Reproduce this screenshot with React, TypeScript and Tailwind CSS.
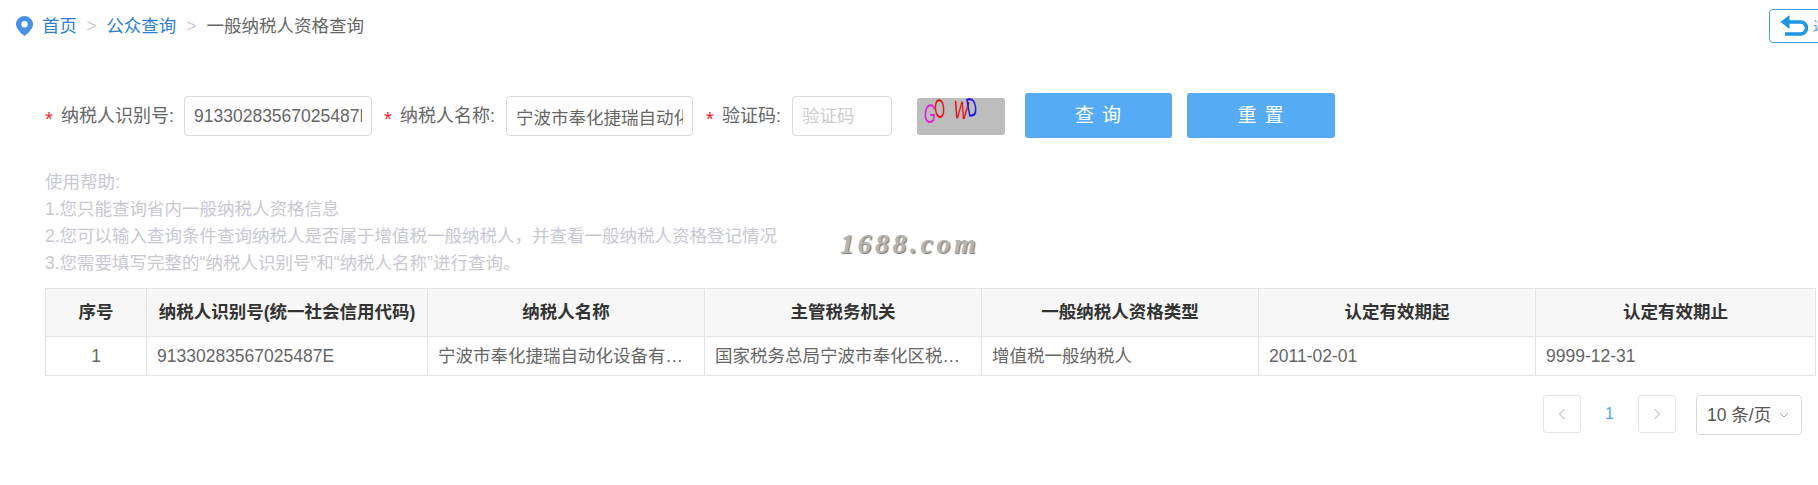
const font = "font-['Liberation_Sans','Noto_Sans_CJK_SC',sans-serif]";

const columns = [
  { title: "序号", width: "w-[101px]" },
  { title: "纳税人识别号(统一社会信用代码)", width: "w-[281px]" },
  { title: "纳税人名称", width: "w-[277px]" },
  { title: "主管税务机关", width: "w-[277px]" },
  { title: "一般纳税人资格类型", width: "w-[277px]" },
  { title: "认定有效期起", width: "w-[277px]" },
  { title: "认定有效期止", width: "w-[280px]" },
];

const row = [
  "91330283567025487E",
  "宁波市奉化捷瑞自动化设备有限公司",
  "国家税务总局宁波市奉化区税务局西坞税务所",
  "增值税一般纳税人",
  "2011-02-01",
  "9999-12-31",
];

function Star() {
  return <span className="mt-[6px] w-[16px] text-[20px] leading-none text-[#f5222d]">*</span>;
}

function Captcha() {
  return (
    <svg width="88" height="37" viewBox="0 0 88 37" className="ml-[25px] rounded-[3px] bg-[#bdbdbd]">
      <g fontFamily="Liberation Sans" fontSize="22">
        <text transform="translate(6 24) rotate(6) scale(0.72 1.2)" fill="#e020e0">G</text>
        <text transform="translate(18 20) rotate(-4) scale(0.62 1.2)" fill="#e01010">O</text>
        <text transform="translate(36 20) rotate(6) scale(0.72 1.15)" fill="#e01010">W</text>
        <text transform="translate(51 19) rotate(-10) scale(0.65 1.2)" fill="#1010e0">D</text>
      </g>
    </svg>
  );
}

export default function App() {
  return (
    <div className={`${font} relative h-[485px] w-[1818px] overflow-hidden bg-white`}>
      <div className="flex h-[52px] items-start pl-[16px] pt-[9px]">
        <div className="flex h-[34px] items-center text-[17.5px] text-[#666]">
          <svg width="17" height="20" viewBox="0 0 17 20" className="mr-[9px]">
            <path
              d="M8.5 0C3.8 0 0 3.7 0 8.3c0 4.6 5.6 9.800 8.500 11.700 2.900-1.900 8.500-7.100 8.500-11.700C17 3.700 13.200 0 8.500 0z"
              fill="#4a8fe7"
            />
            <circle cx="8.500" cy="8.200" r="3.200" fill="#fff" />
          </svg>
          <span className="text-[#2f7fd0]">首页</span>
          <span className="mx-[9.500px] text-[#ccc]">&gt;</span>
          <span className="text-[#2f7fd0]">公众查询</span>
          <span className="mx-[10px] text-[#ccc]">&gt;</span>
          <span>一般纳税人资格查询</span>
        </div>
        <button className="ml-auto mr-[-40px] flex h-[34px] w-[89px] items-center gap-[5px] rounded-[4px] border border-[#4a9fe0] pl-[10px] text-[14px] text-[#4a9fe0]">
          <svg width="28" height="24" viewBox="0 0 28 24" fill="none" stroke="#1f96e0" strokeWidth="3.500">
            <path d="M8 8h12.500a5.500 5.500 0 0 1 0 12H5" />
            <path d="M0.500 8 9.500 1v14z" fill="#1f96e0" stroke="none" />
          </svg>
          返回
        </button>
      </div>

      <div className="mt-[44px] flex h-[40px] items-center pl-[45px] text-[18px] text-[#666]">
        <Star />
        <span className="w-[123px] whitespace-nowrap">纳税人识别号:</span>
        <input
          readOnly
          value="91330283567025487E"
          className="h-[40px] w-[188px] rounded-[4px] border border-[#d9d9d9] px-[9px] text-[17.5px] text-[#666] outline-none"
        />
        <span className="ml-[12px] flex items-center">
          <Star />
        </span>
        <span className="w-[106px] whitespace-nowrap">纳税人名称:</span>
        <input
          readOnly
          value="宁波市奉化捷瑞自动化设备有限公司"
          className="h-[40px] w-[187px] rounded-[4px] border border-[#d9d9d9] px-[9px] text-[17.5px] text-[#666] outline-none"
        />
        <span className="ml-[13px] flex items-center">
          <Star />
        </span>
        <span className="w-[70px] whitespace-nowrap">验证码:</span>
        <input
          placeholder="验证码"
          className="h-[40px] w-[100px] rounded-[4px] border border-[#d9d9d9] px-[9px] text-[17.5px] text-[#666] outline-none placeholder:text-[#ccc]"
        />
        <Captcha />
        <button className="mb-[2px] ml-[20px] h-[45px] w-[147px] rounded-[3px] bg-[#55acf5] pl-[7px] pt-[3px] text-[19px] tracking-[8px] text-white">
          查询
        </button>
        <button className="mb-[2px] ml-[15px] h-[45px] w-[148px] rounded-[3px] bg-[#55acf5] pl-[7px] pt-[3px] text-[19px] tracking-[8px] text-white">
          重置
        </button>
      </div>

      <div className="mt-[33px] pl-[45px] text-[17.5px] leading-[27px] text-[#c8c8d4]">
        <p>使用帮助:</p>
        <p>1.您只能查询省内一般纳税人资格信息</p>
        <p>2.您可以输入查询条件查询纳税人是否属于增值税一般纳税人，并查看一般纳税人资格登记情况</p>
        <p>3.您需要填写完整的“纳税人识别号”和“纳税人名称”进行查询。</p>
      </div>

      <span className="absolute left-[840px] top-[223px] font-['Liberation_Serif',serif] text-[28px] font-bold italic tracking-[3.500px] text-[#b4b4b4] [text-shadow:1px_1px_1px_#777]">
        1688.com
      </span>

      <table className="ml-[45px] mt-[11px] w-[1770px] table-fixed border-collapse text-[17.5px]">
        <thead>
          <tr className="h-[48px] bg-[#f7f7f7]">
            {columns.map((c) => (
              <th key={c.title} className={`${c.width} border border-[#e3e3e3] text-center font-bold text-[#333] whitespace-nowrap`}>
                {c.title}
              </th>
            ))}
          </tr>
        </thead>
        <tbody>
          <tr className="h-[39px] text-[#666]">
            <td className="border border-[#e3e3e3] text-center">1</td>
            {row.map((cell) => (
              <td key={cell} className="truncate border border-[#e3e3e3] px-[10px]">
                {cell}
              </td>
            ))}
          </tr>
        </tbody>
      </table>

      <div className="mt-[19px] flex items-start pl-[1543px]">
        <span className="flex h-[38px] w-[38px] items-center justify-center rounded-[3px] border border-[#e3e3e3]">
          <svg width="10" height="14" viewBox="0 0 10 14" fill="none" stroke="#ccc" strokeWidth="1.200">
            <path d="M7.500 2 2.500 7l5 5" />
          </svg>
        </span>
        <span className="flex h-[38px] w-[57px] items-center justify-center text-[16px] text-[#55a5e8]">1</span>
        <span className="flex h-[38px] w-[38px] items-center justify-center rounded-[3px] border border-[#e3e3e3]">
          <svg width="10" height="14" viewBox="0 0 10 14" fill="none" stroke="#ccc" strokeWidth="1.200">
            <path d="M2.500 2l5 5-5 5" />
          </svg>
        </span>
        <span className="ml-[20px] flex h-[40px] w-[106px] items-center gap-[8px] whitespace-nowrap rounded-[4px] border border-[#d9d9d9] pl-[10px] text-[17.5px] text-[#555]">
          10 条/页
          <svg width="10" height="8" viewBox="0 0 10 8" fill="none" stroke="#aaa" strokeWidth="1">
            <path d="M1 2l4 4 4-4" />
          </svg>
        </span>
      </div>
    </div>
  );
}
